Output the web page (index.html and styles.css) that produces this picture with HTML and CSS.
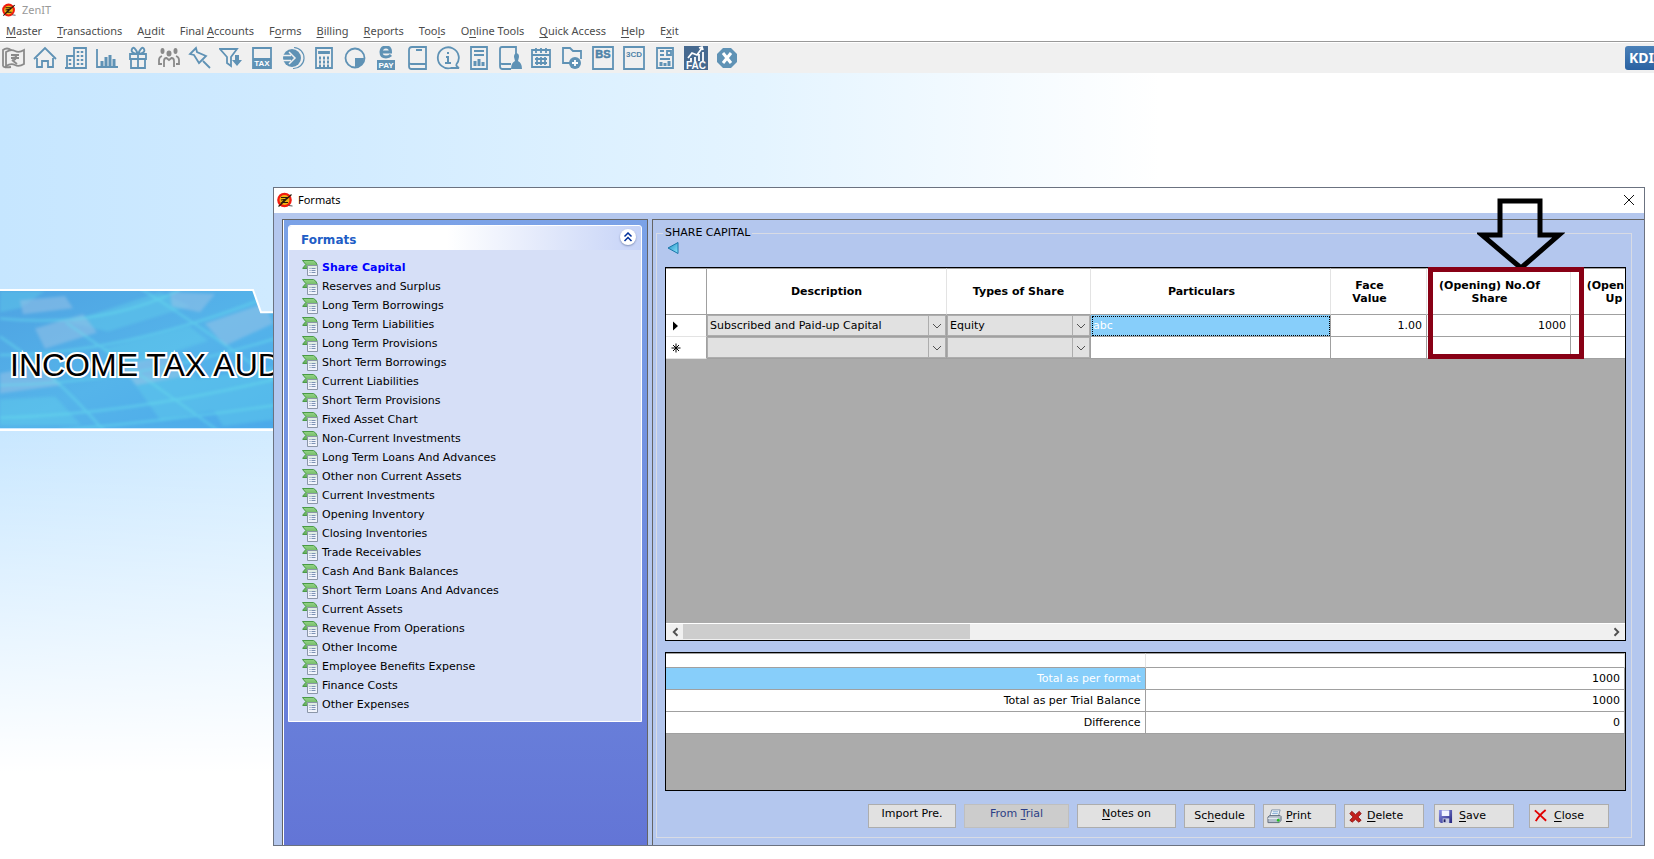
FILE: index.html
```html
<!DOCTYPE html>
<html lang="en">
<head>
<meta charset="utf-8">
<title>ZenIT</title>
<link rel="stylesheet" href="styles.css">
</head>
<body>
<svg class="defs" aria-hidden="true">
  <defs>
    <linearGradient id="g-green" x1="0" y1="0" x2="0" y2="1"><stop offset="0" stop-color="#94d486"/><stop offset="1" stop-color="#62ac5a"/></linearGradient>
    <linearGradient id="g-tri" x1="0" y1="0" x2="1" y2="1"><stop offset="0" stop-color="#1c8fc4"/><stop offset="1" stop-color="#8fe4fb"/></linearGradient>
    <linearGradient id="g-disk" x1="0" y1="0" x2="1" y2="1"><stop offset="0" stop-color="#8f95e8"/><stop offset="1" stop-color="#23237c"/></linearGradient>
    <symbol id="i-logo" viewBox="0 0 16 16">
      <circle cx="7.500" cy="8" r="7.300" fill="#f01c10"/>
      <circle cx="7.500" cy="8" r="5" fill="#f0b414"/>
      <path d="M4 5.500h6.500L5 10.500h6M1.500 14.500 14.500 2.500M4 8l6-1" fill="none" stroke="#2b1a08" stroke-width="1.200"/>
      <path d="M11.500 13.500l4 .5" stroke="#555"/>
    </symbol>
    <symbol id="i-list" viewBox="0 0 16 16">
      <path d="M.5.500h11q2.500 1 3.500 4v4H.8V8l3-3.500Z" fill="url(#g-green)" stroke="#4a9a46"/>
      <path d="M5.500 5.500h10v10h-10z" fill="#f4f7fb" fill-opacity=".85" stroke="#8b96a8"/>
      <path d="M7.500 8.500h1m1 0h4m-6 2h1m1 0h4m-6 2h1m1 0h4" stroke="#7d93b5"/>
    </symbol>
  </defs>
</svg>

<header class="app-title">
  <svg class="logo-small"><use href="#i-logo"/></svg>
  <h1>ZenIT</h1>
</header>

<nav class="menu">
  <a href="#"><u>M</u>aster</a>
  <a href="#"><u>T</u>ransactions</a>
  <a href="#">A<u>u</u>dit</a>
  <a href="#">Final <u>A</u>ccounts</a>
  <a href="#">F<u>o</u>rms</a>
  <a href="#"><u>B</u>illing</a>
  <a href="#"><u>R</u>eports</a>
  <a href="#">Too<u>l</u>s</a>
  <a href="#">O<u>n</u>line Tools</a>
  <a href="#"><u>Q</u>uick Access</a>
  <a href="#"><u>H</u>elp</a>
  <a href="#">E<u>x</u>it</a>
</nav>

<div class="toolbar">
  <button aria-label="Cash"><svg class="gray" viewBox="0 0 24 24"><path d="M1 20V4q4-3 8 0M4 6q5-3 9-1t9-1v14q-5 3-9 1t-9 1ZM1 20q1 2 8 1"/><path d="M9 9h8M9 12h8M10 9q5 0 4 3t-4 2l5 4"/></svg></button>
  <button aria-label="Home"><svg viewBox="0 0 24 24"><path d="M1 13 12 2l11 11M4 12v9h5v-6h6v6h5v-9"/></svg></button>
  <button aria-label="Companies"><svg viewBox="0 0 24 24"><path d="M10 22V2h12v20ZM10 10H3v12h7M1 22h2"/><path stroke-width="2.500" stroke-dasharray="2 2" d="M14 5v14M18 5v14M6 13v7"/></svg></button>
  <button aria-label="Chart"><svg viewBox="0 0 24 24"><path d="M2 3v18h21"/><path stroke-width="3" d="M7 20v-5M11 20v-9M15 20V9M19 20v-7"/></svg></button>
  <button aria-label="Gift"><svg viewBox="0 0 24 24"><path d="M4 8h16v5H4ZM5 13v9h14v-9M12 8v14M12 8Q4 7 6 3t6 5q4-9 6-5t-6 5"/></svg></button>
  <button aria-label="Clients"><svg class="gray" viewBox="0 0 24 24"><path d="M7 21v-6q0-3 2.500-3l2.500 2 2.500-2q2.500 0 2.500 3v6M5 18H2v-4q0-3 3-4M19 18h3v-4q0-3-3-4"/><path class="solid" d="M9.500 7.500a2.500 3 0 0 1 5 0 2.500 3 0 0 1-5 0M3.500 5a2 3 0 0 1 4 0 2 3 0 0 1-4 0M16.500 5a2 3 0 0 1 4 0 2 3 0 0 1-4 0"/></svg></button>
  <button aria-label="Pin"><svg viewBox="0 0 24 24"><path d="M8 2 2 8l4 1 5 8 2-2 3-3 2-2-9-4ZM15 15l7 7"/></svg></button>
  <button aria-label="Filter"><svg viewBox="0 0 24 24"><path d="M1 3h17l-6 8v9l-4-3v-6Z"/><path class="solid" d="M16 9h4v5h3l-5 6-5-6h3z"/></svg></button>
  <button aria-label="Tax"><svg viewBox="0 0 24 24"><path d="M3 2h18v20H3Z"/><path class="solid" d="M3 12h18v10H3z"/><text class="t-white" x="12" y="20">TAX</text></svg></button>
  <button aria-label="Transfer"><svg viewBox="0 0 24 24"><path d="M13 1.500a10.500 10.500 0 1 1-1 21" stroke-width="1.200"/><circle class="solid" cx="11" cy="12" r="9"/><path d="M1 9.500h9M1 14.500h9M8 6l6 6-6 6" stroke="#f0f0f0" stroke-width="1.500"/></svg></button>
  <button aria-label="Calculator"><svg viewBox="0 0 24 24"><path d="M4 2h16v20H4ZM7 6h10v1H7Z"/><path stroke-width="3" stroke-dasharray="2 2" d="M7 12h10M7 16h10M7 20h10"/></svg></button>
  <button aria-label="Pie chart"><svg viewBox="0 0 24 24"><circle cx="12" cy="12" r="9.500"/><path class="solid" d="M12 12h9q0 9-9 9z"/></svg></button>
  <button aria-label="e-Pay"><svg viewBox="0 0 24 24"><path stroke-width="3" d="M7 6h9.500q0-5-4.500-5T7 6q0 5 5 5 3 0 5-2"/><path class="solid" d="M3 14h18v10H3z"/><text class="t-white" x="12" y="22">PAY</text></svg></button>
  <button aria-label="Book"><svg viewBox="0 0 24 24"><path d="M4 20V4q0-3 3-3h14v22H6q-2 0-2-3t2-2h15M11 4h6"/></svg></button>
  <button aria-label="Information"><svg viewBox="0 0 24 24"><path d="M20 19a10.500 10.500 0 1 0-5 3h8q-2-1-3-3"/><path stroke-width="2" d="M12 6v2M10 11h2v6M9 17h6"/></svg></button>
  <button aria-label="Report"><svg viewBox="0 0 24 24"><path d="M4 1h16v22H4ZM7 5h10M7 9h10"/><path stroke-width="3" d="M8 20v-5M12 20v-7M16 20v-4"/></svg></button>
  <button aria-label="User ledger"><svg viewBox="0 0 24 24"><path d="M2 20V3q0-2 2-2h14v9M13 23H4q-2 0-2-3t2-2h9"/><path class="solid" d="M16 11a2 3 0 0 1 5 0l-1 4q4 2 4 8H13q0-6 4-8z"/></svg></button>
  <button aria-label="Calendar"><svg viewBox="0 0 24 24"><path d="M3 4h18v17H3ZM3 9h18M7 2v5M12 2v5M17 2v5M6 13h12M6 17h12M8 11v8M12 11v8M16 11v8"/></svg></button>
  <button aria-label="New folder"><svg viewBox="0 0 24 24"><path d="M10 17H3V2h7l3 3h8v8"/><circle class="solid" cx="15" cy="17" r="6"/><path class="white" d="M12 17h6M15 14v6"/></svg></button>
  <button aria-label="Balance sheet"><svg viewBox="0 0 24 24"><path d="M2 1h20v22H2Z"/><text class="t-blue" x="12" y="12">BS</text></svg></button>
  <button aria-label="Form 3CD"><svg viewBox="0 0 24 24"><path d="M2 1h20v22H2Z"/><text class="t-blue t-small" x="12" y="11">3CD</text></svg></button>
  <button aria-label="Summary"><svg viewBox="0 0 24 24"><path d="M4 2h16v20H4ZM7 5h4M7 9h4M14 5h4v4h-4ZM7 13h10"/><path stroke-width="3" d="M8 20v-4M12 20v-3M16 20v-5"/></svg></button>
  <button aria-label="FAC"><svg viewBox="0 0 24 24"><path fill="#46698f" stroke="none" d="M0 0h24v24H0z"/><path class="white" d="M4 12l4-5 5 2 5-7M15 2l3-1 1 3M7 15v-3M11 15v-4M15 15V8M19 15V6"/><text class="t-white t-fac" x="12" y="23">FAC</text></svg></button>
  <button aria-label="Exit"><svg viewBox="0 0 24 24"><path class="solid" d="M8 2h8l6 6v8l-6 6H8l-6-6V8z"/><path class="white" stroke-width="3" d="M8 7l8 10M16 7 8 17"/></svg></button>
  <button class="kdi">KDI</button>
</div>

<main class="desktop">
  <div class="banner">
    <svg class="banner-art" viewBox="0 0 273 142" preserveAspectRatio="none" aria-hidden="true">
      <defs>
        <linearGradient id="g-ban" x1="0" y1="0" x2="1" y2="1"><stop offset="0" stop-color="#4ea2e2"/><stop offset=".5" stop-color="#55b4ea"/><stop offset="1" stop-color="#4aa8ea"/></linearGradient>
        <clipPath id="c-ban"><path d="M0 2h253l8 22h39v114H0z"/></clipPath>
        <filter id="f-soft"><feGaussianBlur stdDeviation="1.500"/></filter>
      </defs>
      <g clip-path="url(#c-ban)">
        <path d="M0 0h300v142H0z" fill="url(#g-ban)"/>
        <g filter="url(#f-soft)">
          <g fill="#5fd0ea" opacity=".4">
            <path d="M0 3h45L20 20 0 24zM68 34 160 4l30 14-82 25zM102 60l88-22 18 14-80 26zM0 110l55-3 26 28H0zM195 90l78-12v52l-50 6zM130 88l60-8 30 40-60 10z"/>
          </g>
          <g fill="#9cc4e8" opacity=".5">
            <path d="M20 12l45-4 8 12-50 6zM35 40l48-14 14 18-52 16zM205 35l60-20 8 20-48 22zM0 84l45-8 16 20-61 8zM120 76l50-10 18 20-52 10zM170 4l45 2-15 18-28-6z"/>
          </g>
          <g fill="none" stroke="#66dcee" stroke-width="2" opacity=".6">
            <path d="M0 30Q100 40 180 2M0 66Q120 66 270 8M0 96Q140 94 300 42M0 128Q140 124 300 84M60 140Q180 130 300 112"/>
            <path d="M0 48Q50 80 105 142M66 34Q130 78 220 142M140 0Q220 50 300 110"/>
          </g>
        </g>
      </g>
      <path d="M0 2h253l8 22h39M0 140h300" fill="none" stroke="#fff" stroke-width="2"/>
    </svg>
    <p class="banner-text">INCOME TAX AUD</p>
  </div>
</main>

<section class="dialog" aria-label="Formats">
  <header class="dialog-title">
    <svg class="logo"><use href="#i-logo"/></svg>
    <h2>Formats</h2>
    <button class="x" aria-label="Close window"><svg viewBox="0 0 10 10"><path d="M0 0l10 10M10 0 0 10"/></svg></button>
  </header>
  <div class="dialog-body">
    <aside class="side">
      <div class="card">
        <div class="card-head">
          <h3>Formats</h3>
          <button class="collapse" aria-label="Collapse"><svg viewBox="0 0 10 10"><path d="M1.500 4.500 5 1l3.500 3.500M1.500 9 5 5.500 8.500 9"/></svg></button>
        </div>
        <ul class="list">
          <li><a class="current" href="#"><svg><use href="#i-list"/></svg>Share Capital</a></li>
          <li><a href="#"><svg><use href="#i-list"/></svg>Reserves and Surplus</a></li>
          <li><a href="#"><svg><use href="#i-list"/></svg>Long Term Borrowings</a></li>
          <li><a href="#"><svg><use href="#i-list"/></svg>Long Term Liabilities</a></li>
          <li><a href="#"><svg><use href="#i-list"/></svg>Long Term Provisions</a></li>
          <li><a href="#"><svg><use href="#i-list"/></svg>Short Term Borrowings</a></li>
          <li><a href="#"><svg><use href="#i-list"/></svg>Current Liabilities</a></li>
          <li><a href="#"><svg><use href="#i-list"/></svg>Short Term Provisions</a></li>
          <li><a href="#"><svg><use href="#i-list"/></svg>Fixed Asset Chart</a></li>
          <li><a href="#"><svg><use href="#i-list"/></svg>Non-Current Investments</a></li>
          <li><a href="#"><svg><use href="#i-list"/></svg>Long Term Loans And Advances</a></li>
          <li><a href="#"><svg><use href="#i-list"/></svg>Other non Current Assets</a></li>
          <li><a href="#"><svg><use href="#i-list"/></svg>Current Investments</a></li>
          <li><a href="#"><svg><use href="#i-list"/></svg>Opening Inventory</a></li>
          <li><a href="#"><svg><use href="#i-list"/></svg>Closing Inventories</a></li>
          <li><a href="#"><svg><use href="#i-list"/></svg>Trade Receivables</a></li>
          <li><a href="#"><svg><use href="#i-list"/></svg>Cash And Bank Balances</a></li>
          <li><a href="#"><svg><use href="#i-list"/></svg>Short Term Loans And Advances</a></li>
          <li><a href="#"><svg><use href="#i-list"/></svg>Current Assets</a></li>
          <li><a href="#"><svg><use href="#i-list"/></svg>Revenue From Operations</a></li>
          <li><a href="#"><svg><use href="#i-list"/></svg>Other Income</a></li>
          <li><a href="#"><svg><use href="#i-list"/></svg>Employee Benefits Expense</a></li>
          <li><a href="#"><svg><use href="#i-list"/></svg>Finance Costs</a></li>
          <li><a href="#"><svg><use href="#i-list"/></svg>Other Expenses</a></li>
        </ul>
      </div>
    </aside>

    <div class="work">
      <fieldset class="group">
        <legend>SHARE CAPITAL</legend>
        <div class="group-inner">
          <button class="back" aria-label="Back"><svg viewBox="0 0 12 12"><path d="M1 6 11 .5v11z" fill="url(#g-tri)" stroke="#1976a8"/></svg></button>

          <div class="grid">
            <div class="grid-view">
              <table class="entries">
                <colgroup><col class="c-mark"><col class="c-desc"><col class="c-type"><col class="c-part"><col class="c-face"><col class="c-open"><col class="c-paid"></colgroup>
                <thead>
                  <tr><th></th><th>Description</th><th>Types of Share</th><th class="sortable">Particulars</th><th class="sortable">Face<br>Value</th><th class="sortable">(Opening) No.Of<br>Share</th><th class="sortable">(Opening) Paid<br>Up Value</th></tr>
                </thead>
                <tbody>
                  <tr>
                    <td class="mark"><svg viewBox="0 0 12 12"><path d="M3 1.500 8 6l-5 4.500z"/></svg></td>
                    <td class="pick"><select aria-label="Description"><option>Subscribed and Paid-up Capital</option></select></td>
                    <td class="pick"><select aria-label="Types of share"><option>Equity</option></select></td>
                    <td class="active">abc</td><td class="num">1.00</td><td class="num">1000</td><td></td>
                  </tr>
                  <tr>
                    <td class="mark"><svg viewBox="0 0 12 12"><path d="M6 1.500v9M1.500 6h9M3 3l6 6M9 3 3 9" stroke="#000"/></svg></td>
                    <td class="pick"><select aria-label="New description"><option></option></select></td>
                    <td class="pick"><select aria-label="New type of share"><option></option></select></td>
                    <td></td><td></td><td></td><td></td>
                  </tr>
                </tbody>
              </table>
            </div>
            <div class="scroll">
              <button aria-label="Scroll left"><svg viewBox="0 0 8 8"><path d="M6 1 3 4l3 3"/></svg></button>
              <div class="track"><div class="thumb"></div></div>
              <button aria-label="Scroll right"><svg viewBox="0 0 8 8"><path d="M2 1l3 3-3 3"/></svg></button>
            </div>
            <svg class="pointer" viewBox="0 0 88 72" aria-hidden="true"><path d="M23 37V3h40v34h19L44 70 5 37Z"/></svg>
            <div class="highlight"></div>
          </div>

          <div class="totals">
            <table>
              <thead><tr><th></th><th></th></tr></thead>
              <tbody>
                <tr><td class="selected">Total as per format</td><td>1000</td></tr>
                <tr><td>Total as per Trial Balance</td><td>1000</td></tr>
                <tr><td>Difference</td><td>0</td></tr>
              </tbody>
            </table>
          </div>

          <div class="actions">
            <button class="b-import high">Import Pre.</button>
            <button class="b-trial high" disabled><span>From <u>T</u>rial</span></button>
            <button class="b-notes high"><span><u>N</u>otes on</span></button>
            <button class="b-sched"><span>Sc<u>h</u>edule</span></button>
            <button class="b-print icon"><svg viewBox="0 0 16 16"><path d="M5 1h9l-2 7H3z" fill="#fff" stroke="#7b8fa8"/><path d="M6 3h6M5.500 5h6" stroke="#6f9fd0"/><path d="M1 8.500 3 7h11l1 1v4l-2 2.500H1z" fill="#b4bfcc" stroke="#5f6c7c"/><path d="M1 10h11" stroke="#eef2f6"/><circle cx="12" cy="12" r="1.500" fill="#22c322"/></svg><span><u>P</u>rint</span></button>
            <button class="b-wide icon"><svg viewBox="0 0 16 16"><path d="M4 2.500 8 6l4-3.500L14 5l-3.500 3.500L14 12l-2.500 2L8 11l-3.500 3L2 12l3.500-3.500L2 5z" fill="#c4201c" stroke="#8f1512"/></svg><span><u>D</u>elete</span></button>
            <button class="b-wide b-save icon"><svg viewBox="0 0 16 16"><path d="M1 1h14v14H3l-2-2z" fill="url(#g-disk)"/><path d="M4 1.500h8v6H4z" fill="#f2f5ff"/><path d="M5 10h7v5H5z" fill="#c7cbe0"/><path d="M6 11h2v3H6z" fill="#1d1d5e"/></svg><span><u>S</u>ave</span></button>
            <button class="b-wide b-close icon"><svg viewBox="0 0 16 16"><path d="M2 1.500Q7 6 14 12.500M13.500 1Q6 7 3 13" fill="none" stroke="#e00000" stroke-width="2"/></svg><span><u>C</u>lose</span></button>
          </div>
        </div>
      </fieldset>
    </div>
  </div>
</section>
</body>
</html>
```

FILE: styles.css
```css
* { box-sizing: border-box; }

body {
  position: relative;
  display: flex;
  flex-direction: column;
  min-height: 100vh;
  margin: 0;
  overflow: hidden;
  background: #fff;
  font: 11px/14px Verdana, "DejaVu Sans", sans-serif;
  color: #000;
}

button, select { font: inherit; color: inherit; }
h1, h2, h3, p, ul { margin: 0; padding: 0; }
.defs { position: absolute; width: 0; height: 0; }

/* Application frame */
.app-title {
  display: flex;
  align-items: center;
  gap: 6px;
  height: 19px;
  padding: 0 2px;
}
.app-title h1 { font: 11px/16px "Noto Sans", sans-serif; color: #999; }
.logo-small { width: 14px; height: 14px; }

.menu {
  display: flex;
  align-items: center;
  gap: 15px;
  height: 23px;
  padding: 1px 6px 0;
  border-bottom: 1px solid #999;
  font: 11px/16px "Noto Sans", sans-serif;
}
.menu a { color: #4c4c4c; text-decoration: none; white-space: nowrap; }
.menu u, .actions u { text-underline-offset: 2px; }

.toolbar {
  display: flex;
  align-items: center;
  gap: 7px;
  height: 31px;
  padding-left: 2px;
  border-top: 1px solid #fff;
  background: #f0f0f0;
  overflow: hidden;
}
.toolbar button {
  flex: none;
  display: flex;
  width: 24px;
  height: 24px;
  padding: 0;
  border: 0;
  background: none;
}
.toolbar svg {
  width: 24px;
  height: 24px;
  fill: none;
  stroke: #5f92b5;
  stroke-width: 1.8;
}
.toolbar .gray { stroke: #8a8a8a; }
.toolbar .solid { fill: #5f92b5; stroke: none; }
.toolbar .gray .solid { fill: #8a8a8a; }
.toolbar .white { stroke: #fff; }
.toolbar text {
  stroke: none;
  font: bold 8px "Liberation Sans", sans-serif;
  text-anchor: middle;
}
.toolbar .t-white { fill: #fff; }
.toolbar .t-blue { fill: #4f83a8; stroke: #4f83a8; stroke-width: .5; font-size: 11px; }
.toolbar .t-small { stroke: none; font-size: 8px; }
.toolbar .t-fac { font-size: 10px; }
.toolbar .kdi {
  width: 34px;
  margin: 0 -5px 0 auto;
  padding-left: 4px;
  align-items: center;
  border-radius: 3px;
  background: linear-gradient(#4a80b8, #2a62a2);
  color: #fff;
  font: bold 14px/24px "Noto Sans", sans-serif;
}

.desktop {
  flex: 1;
  padding-top: 215px;
  background:
    linear-gradient(to bottom, rgba(255,255,255,0) 340px, #fff 700px),
    linear-gradient(to right, #c6e6ff 0, #cfeaff 270px, #e4f4ff 760px, #fff 1160px);
}

.banner {
  position: relative;
  width: 273px;
  height: 144px;
  overflow: hidden;
}
.banner-art { display: block; width: 100%; height: 100%; }
.banner-text {
  position: absolute;
  left: 10px;
  top: 54px;
  font: 32px/46px "Liberation Sans Narrow", "Arial Narrow", "Liberation Sans", sans-serif;
  white-space: nowrap;
  -webkit-text-stroke: 4px #fff;
  paint-order: stroke fill;
}

/* Dialog window */
.dialog {
  position: absolute;
  left: 273px;
  right: 9px;
  top: 187px;
  bottom: 13px;
  display: flex;
  flex-direction: column;
  border: 1px solid #6b7280;
  background: #b4c7ee;
}
.dialog-title {
  display: flex;
  align-items: center;
  gap: 5px;
  height: 25px;
  padding: 0 10px 2px 3px;
  background: #fff;
}
.dialog-title h2 { flex: 1; font: 11px/16px "Noto Sans", sans-serif; }
.logo { width: 16px; height: 16px; }
.x { display: flex; padding: 0; border: 0; background: none; }
.x svg { width: 10px; height: 10px; stroke: #111; }

.dialog-body {
  flex: 1;
  display: flex;
  gap: 4px;
  min-height: 0;
  padding: 6px 0 0 8px;
}

.side {
  flex: none;
  width: 366px;
  padding: 5px;
  border: 1px solid #646464;
  border-bottom: 0;
  background: linear-gradient(#7ba2e7, #6375d6);
  box-shadow: inset 1px 0 #fff;
}
.card { border: 1px solid #fff; border-radius: 3px 3px 0 0; background: #d6dff7; }
.card-head {
  display: flex;
  align-items: center;
  justify-content: space-between;
  height: 24px;
  padding: 0 5px 0 12px;
  border-radius: 3px 3px 0 0;
  background: linear-gradient(to right, #fff 45%, #c6d3f7);
}
.card-head h3 { padding-top: 3px; font-size: 12px; color: #215dc6; }
.collapse {
  display: flex;
  align-items: center;
  justify-content: center;
  width: 16px;
  height: 16px;
  margin-bottom: 3px;
  padding: 0;
  border: 0;
  border-radius: 50%;
  background: #fff;
  box-shadow: 0 1px 2px #8090b8;
}
.collapse svg { width: 10px; height: 10px; fill: none; stroke: #00309c; stroke-width: 1.5; }
.list { padding: 8px 13px 7px; list-style: none; }
.list a {
  display: flex;
  align-items: center;
  gap: 4px;
  height: 19px;
  color: #000;
  text-decoration: none;
}
.list svg { width: 16px; height: 16px; }
.list .current { color: #00f; font-weight: bold; }

.work {
  flex: 1;
  display: flex;
  min-width: 0;
  padding: 6px 12px 7px 3px;
  border: solid #646464;
  border-width: 1px 0 0 1px;
}
.group {
  flex: 1;
  display: flex;
  min-width: 0;
  margin: 0;
  padding: 0 5px 9px 8px;
  border: 1px solid #d8dbe4;
}
.group legend { padding: 0 2px; margin-left: -2px; }
.group-inner { flex: 1; display: flex; flex-direction: column; min-width: 0; height: 100%; }
.back { align-self: flex-start; display: flex; margin: 2px 0 13px 2px; padding: 0; border: 0; background: none; }
.back svg { width: 12px; height: 12px; }

.grid {
  position: relative;
  flex: 1;
  display: flex;
  flex-direction: column;
  min-height: 0;
  border: 1px solid #000;
  background: #ababab;
}
.grid-view { flex: 1; overflow: hidden; }
table { border-collapse: separate; border-spacing: 0; table-layout: fixed; }
.entries { width: 1048px; }
.c-mark { width: 41px; }
.c-desc { width: 240px; }
.c-type { width: 144px; }
.c-part { width: 240px; }
.c-face { width: 96px; }
.c-open { width: 144px; }
.c-paid { width: 143px; }
.entries th {
  height: 47px;
  padding: 0;
  border: solid #e3e3e3;
  border-width: 1px 1px 1px 0;
  border-top-color: #a0a0a0;
  border-bottom-color: #a0a0a0;
  background: #fff;
  font-weight: bold;
  line-height: 13px;
}
.entries th:first-child { border-right-color: #a0a0a0; }
.entries .sortable { padding-right: 18px; white-space: nowrap; }
.entries td {
  height: 22px;
  padding: 0 4px 0 2px;
  border: solid #a0a0a0;
  border-width: 0 1px 1px 0;
  background: #fff;
  line-height: 14px;
}
.entries .mark { padding: 0 0 0 4px; border-bottom-color: #e3e3e3; }
.mark svg { display: block; width: 12px; height: 12px; }
.entries .pick { padding: 0; }
.pick select {
  display: block;
  width: 100%;
  height: 21px;
  padding: 0 0 0 2px;
  border: 1px solid #adadad;
  border-radius: 0;
  appearance: none;
  background:
    url("data:image/svg+xml,%3Csvg xmlns='http://www.w3.org/2000/svg' width='17' height='19'%3E%3Cpath d='M.5 0v19' stroke='%23adadad'/%3E%3Cpath d='M5 8l4 4 4-4' fill='none' stroke='%23505050'/%3E%3C/svg%3E") right center no-repeat
    #e1e1e1;
}
.entries .num { text-align: right; }
.entries .active { background: #87cefa; color: #fff; outline: 1px dotted #000; outline-offset: -2px; }
.highlight {
  position: absolute;
  left: 762px;
  top: -1px;
  width: 156px;
  height: 92px;
  border: 5px solid #880015;
}
.pointer {
  position: absolute;
  right: 60px;
  top: -70px;
  width: 88px;
  height: 72px;
  fill: none;
  stroke: #000;
  stroke-width: 5;
}

.scroll { display: flex; height: 17px; border-top: 1px solid #fff; background: #f0f0f0; }
.scroll button {
  display: flex;
  align-items: center;
  justify-content: center;
  width: 17px;
  padding: 0;
  border: 0;
  background: none;
}
.scroll svg { width: 10px; height: 10px; fill: none; stroke: #505050; stroke-width: 1.5; }
.track { flex: 1; }
.thumb { width: 31%; height: 15px; background: #cdcdcd; }

.totals { flex: none; height: 139px; margin-top: 11px; border: 1px solid #000; background: #ababab; }
.totals table { width: 100%; }
.totals th { height: 15px; padding: 0; background: #fff; border: solid #a0a0a0; border-width: 1px 1px 1px 0; border-right-color: #e3e3e3; }
.totals td {
  height: 22px;
  padding: 0 4px;
  border: solid #a0a0a0;
  border-width: 0 1px 1px 0;
  background: #fff;
  text-align: right;
}
.totals .selected { background: #87cefa; color: #fff; }

.actions { flex: none; display: flex; justify-content: flex-end; gap: 8px; margin-top: 13px; padding-right: 17px; }
.actions button {
  display: flex;
  align-items: center;
  justify-content: center;
  height: 24px;
  padding: 0;
  border: 1px solid #adadad;
  background: #e1e1e1;
  white-space: nowrap;
}
.actions .high { padding-bottom: 4px; }
.actions .icon { justify-content: flex-start; gap: 4px; padding-left: 3px; }
.actions svg { width: 15px; height: 15px; }
.actions button:disabled { background: #ccc; border-color: #bfbfbf; color: #2c3f86; }
.b-import { width: 88px; }
.b-trial { width: 105px; }
.b-notes { width: 99px; }
.b-sched { width: 71px; }
.b-print { width: 73px; }
.b-wide { width: 80px; }
.actions .b-save { margin-left: 2px; gap: 6px; }
.actions .b-close { margin-left: 7px; gap: 6px; }
```
